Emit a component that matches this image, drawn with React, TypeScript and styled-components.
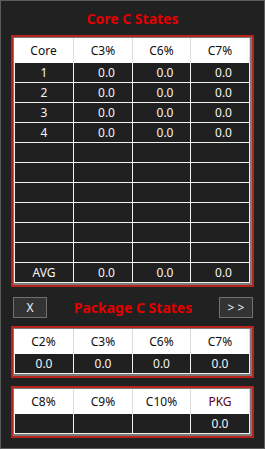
import * as React from 'react'
import styled, {createGlobalStyle} from 'styled-components'

const GlobalStyle = createGlobalStyle`
  html, body {
    margin: 0;
    padding: 0;
    background: #202020;
  }
`

const Window = styled.div`
  box-sizing: border-box;
  width: 265px;
  height: 449px;
  border: 1px solid #5c5c5c;
  background: #212121;
  display: flex;
  flex-direction: column;
  font-family: "Noto Sans", "Open Sans", sans-serif;
  font-size: 12px;
`

const Heading = styled.div`
  color: #e30000;
  font-family: "Noto Sans", sans-serif;
  font-weight: 700;
  font-size: 14px;
  text-align: center;
`

const TitleBar = styled.div`
  height: 34px;
  display: flex;
  align-items: center;
  justify-content: center;
`

const Frame = styled.div`
  margin: 0 10px;
  border: 2px solid #b8231d;
  background: #7a7a7a;
  padding: 1px 2px 2px 1px;
`

const Grid = styled.div`
  display: grid;
  grid-template-columns: 60px 59px 58px 59px;
`

const HeadCell = styled.div<{$tone?: string}>`
  box-sizing: border-box;
  height: 25px;
  background: #fff;
  border-right: 1px solid #dcdcdc;
  color: ${p => p.$tone || '#101010'};
  display: flex;
  align-items: center;
  justify-content: center;
`

const Cell = styled.div<{$shift?: number}>`
  box-sizing: border-box;
  height: 20px;
  background: #202020;
  border-right: 1px solid #f2f2f2;
  border-bottom: 1px solid #f2f2f2;
  color: #f4f4f4;
  display: flex;
  align-items: center;
  justify-content: center;
  padding-left: ${p => p.$shift || 0}px;
  &:nth-child(4n + 1) {
    border-left: 1px solid #f2f2f2;
  }
`

const ButtonRow = styled.div`
  display: flex;
  align-items: center;
  justify-content: space-between;
  padding: 0 11px 0 12px;
  margin: 10px 0 8px;
`

const SmallButton = styled.div`
  box-sizing: border-box;
  width: 34px;
  height: 21px;
  background: #333;
  border: 1px solid #707070;
  color: #eef4ff;
  display: flex;
  align-items: center;
  justify-content: center;
  font-size: 12px;
  white-space: pre;
`

const Gap = styled.div`
  height: 8px;
`

const coreRows = [
  ['1', '0.0', '0.0', '0.0'],
  ['2', '0.0', '0.0', '0.0'],
  ['3', '0.0', '0.0', '0.0'],
  ['4', '0.0', '0.0', '0.0'],
  ['', '', '', ''],
  ['', '', '', ''],
  ['', '', '', ''],
  ['', '', '', ''],
  ['', '', '', ''],
  ['', '', '', ''],
  ['AVG', '0.0', '0.0', '0.0'],
]

function Table({heads, rows, shift = 0, tones = []}: {
  heads: string[]
  rows: string[][]
  shift?: number
  tones?: (string | undefined)[]
}) {
  return (
    <Frame>
      <Grid>
        {heads.map((h, i) => <HeadCell key={'h' + i} $tone={tones[i]}>{h}</HeadCell>)}
        {rows.map((r, ri) => r.map((v, ci) => (
          <Cell key={ri + '-' + ci} $shift={ci > 0 ? shift : 0}>{v}</Cell>
        )))}
      </Grid>
    </Frame>
  )
}

export default function App() {
  return (
    <Window>
      <GlobalStyle />
      <TitleBar><Heading>Core C States</Heading></TitleBar>
      <Table heads={['Core', 'C3%', 'C6%', 'C7%']} rows={coreRows} shift={7} />
      <ButtonRow>
        <SmallButton>X</SmallButton>
        <Heading>Package C States</Heading>
        <SmallButton>{'> >'}</SmallButton>
      </ButtonRow>
      <Table heads={['C2%', 'C3%', 'C6%', 'C7%']} rows={[['0.0', '0.0', '0.0', '0.0']]} />
      <Gap />
      <Table
        heads={['C8%', 'C9%', 'C10%', 'PKG']}
        rows={[['', '', '', '0.0']]}
        tones={[undefined, undefined, undefined, '#5a0016']}
      />
    </Window>
  )
}
